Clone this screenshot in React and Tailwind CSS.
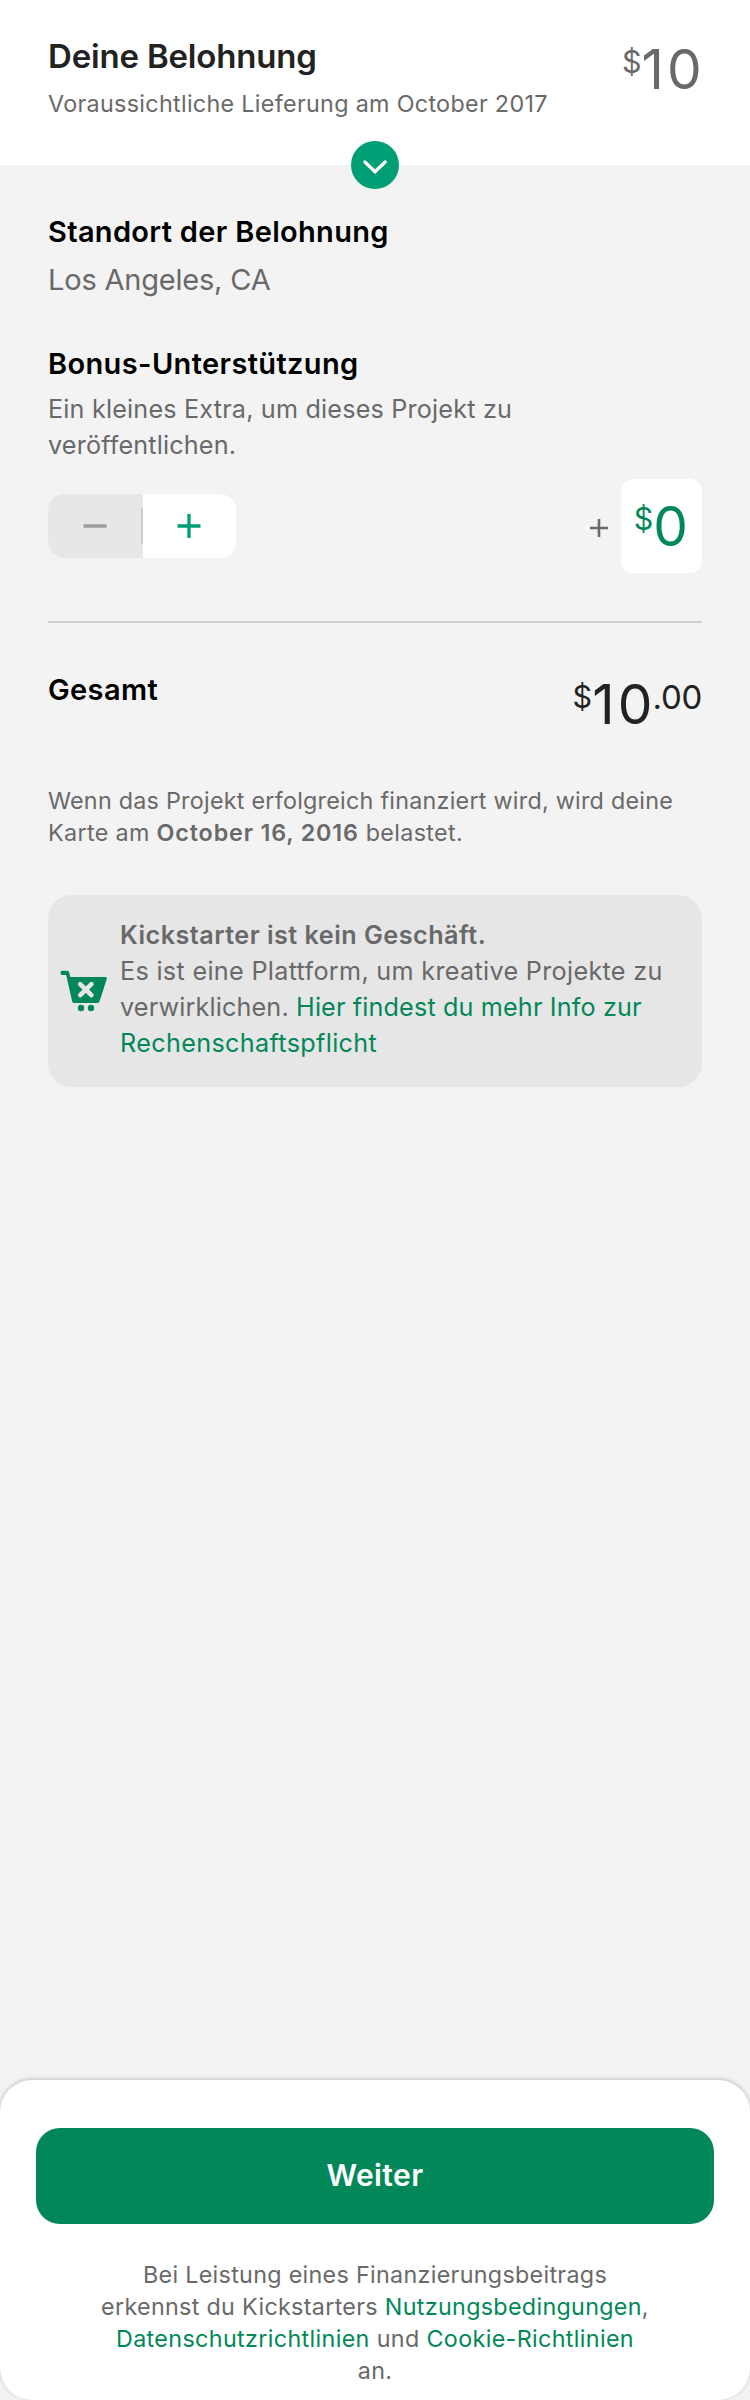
function ChevronBadge() {
  return (
    <button className="absolute -bottom-6 left-[351px] flex size-12 items-center justify-center rounded-full bg-[#009e74]">
      <svg viewBox="0 0 48 48" className="size-12" fill="none" stroke="#fff" strokeWidth="3.3" strokeLinecap="round" strokeLinejoin="miter">
        <path d="M13.9 21 24 30.7 34.100 21" />
      </svg>
    </button>
  );
}

function CartIcon() {
  return (
    <svg viewBox="0 0 48 42" className="h-[42px] w-12 shrink-0">
      <path
        fill="#028858"
        d="M2.2.8H7c1.2 0 1.9.6 2.2 1.8L10.3 7h35.2c1.1 0 1.6.8 1.3 1.8l-7.2 22.4c-.4 1.2-1.2 1.8-2.4 1.8H14.4c-1.2 0-2-.6-2.3-1.8L6.2 4.9h-4C1.1 4.9.6 4.2.6 2.9S1.1.8 2.2.8Z"
      />
      <path d="m20.2 14.2 11.2 11M31.4 14.2l-11.2 11" stroke="#e6e6e6" strokeWidth="4.6" strokeLinecap="round" />
      <circle cx="21" cy="38" r="3.2" fill="#028858" />
      <circle cx="31" cy="38" r="3.2" fill="#028858" />
    </svg>
  );
}

function Price({ amount, cents, spread }) {
  return (
    <div className="flex items-start whitespace-nowrap">
      <span className="mt-[5px] text-[30.5px] leading-8">$</span>
      <span className={spread ? "text-[55px] leading-[56px] tracking-[3.2px]" : "text-[55px] leading-[56px]"}>{amount}</span>
      {cents && <span className="mt-[5px] -ml-[3px] text-[33px] leading-8 tracking-[-0.3px]">{cents}</span>}
    </div>
  );
}

function Header() {
  return (
    <header className="relative flex h-[165px] items-start justify-between bg-white pr-[45px] pl-12">
      <div className="pt-9 whitespace-nowrap">
        <h1 className="text-[33px] leading-10 font-semibold tracking-[-0.18px] text-[#222222]">Deine Belohnung</h1>
        <p className="mt-3 text-[23.3px] leading-8 tracking-[0.32px] text-[#696969]">
          Voraussichtliche Lieferung am October 2017
        </p>
      </div>
      <div className="pt-[41px] text-[#696969]">
        <Price amount="10" spread />
      </div>
      <ChevronBadge />
    </header>
  );
}

function Stepper() {
  return (
    <div className="flex h-16 w-[188px] overflow-hidden rounded-2xl bg-white">
      <button className="relative flex w-[95px] items-center justify-center bg-[#e7e7e7] pr-0.5">
        <svg viewBox="0 0 24 24" className="size-6" stroke="#9b9c9c" strokeWidth="3.6">
          <path d="M.5 12h23" />
        </svg>
        <span className="absolute top-[14px] right-0 h-9 w-0.5 bg-[#cccccc]" />
      </button>
      <button className="flex w-[93px] items-center justify-center pr-px">
        <svg viewBox="0 0 24 24" className="size-6" stroke="#009e74" strokeWidth="3.3">
          <path d="M.5 12h23M12 0v24" />
        </svg>
      </button>
    </div>
  );
}

function Notice() {
  return (
    <aside className="mt-[46px] flex h-48 items-center gap-3 rounded-3xl bg-[#e6e6e6] pl-3 text-[25.2px] leading-9 whitespace-nowrap text-[#696969]">
      <CartIcon />
      <div className="pb-1">
        <p className="font-semibold tracking-[0.48px]">Kickstarter ist kein Geschäft.</p>
        <p className="tracking-[0.31px]">Es ist eine Plattform, um kreative Projekte zu</p>
        <p className="tracking-[0.145px]">
          verwirklichen. <a className="text-[#028858]">Hier findest du mehr Info zur</a>
        </p>
        <p className="tracking-[0.34px]">
          <a className="text-[#028858]">Rechenschaftspflicht</a>
        </p>
      </div>
    </aside>
  );
}

function Footer() {
  return (
    <footer className="h-80 rounded-[32px] bg-white px-9 pt-12 shadow-[0_-1px_4px_rgba(0,0,0,0.22)]">
      <button className="flex h-24 w-full items-center justify-center rounded-3xl bg-[#028858] pb-px text-[30px] font-semibold tracking-[0.4px] text-white">
        Weiter
      </button>
      <div className="mt-[35px] text-center text-[23.3px] leading-8 whitespace-nowrap text-[#696969]">
        <p className="tracking-[0.311px]">Bei Leistung eines Finanzierungsbeitrags</p>
        <p className="tracking-[0.32px]">
          erkennst du Kickstarters <a className="text-[#028858]">Nutzungsbedingungen</a>,
        </p>
        <p className="tracking-[0.36px]">
          <a className="text-[#028858]">Datenschutzrichtlinien</a> und <a className="text-[#028858]">Cookie-Richtlinien</a>
        </p>
        <p className="tracking-[0.3px]">an.</p>
      </div>
    </footer>
  );
}

export default function App() {
  return (
    <div className="flex h-[2400px] w-[750px] flex-col overflow-hidden bg-[#f3f3f3] font-['Inter','Liberation_Sans',sans-serif]">
      <Header />
      <main className="flex-1 px-12 pt-[49px] text-[#696969]">
        <h2 className="text-[29px] leading-9 font-semibold tracking-[0.322px] text-black">Standort der Belohnung</h2>
        <p className="mt-3 text-[29px] leading-9 tracking-[-0.2px]">Los Angeles, CA</p>

        <h2 className="mt-12 text-[29px] leading-9 font-semibold tracking-[0.363px] text-black">Bonus-Unterstützung</h2>
        <div className="mt-[9px] text-[25.2px] leading-9 whitespace-nowrap">
          <p className="tracking-[0.18px]">Ein kleines Extra, um dieses Projekt zu</p>
          <p className="tracking-[0.16px]">veröffentlichen.</p>
        </div>

        <div className="mt-4 flex items-center justify-between">
          <Stepper />
          <div className="flex items-center gap-[13px]">
            <svg viewBox="0 0 18 18" className="mt-1 size-[18px]" stroke="#696969" strokeWidth="2.6">
              <path d="M0 9h18M9 0v18" />
            </svg>
            <div className="flex h-[94px] w-[81px] items-start justify-end rounded-xl bg-white pt-[19px] pr-3.5 text-[#028858]">
              <Price amount="0" />
            </div>
          </div>
        </div>

        <hr className="mt-12 h-0.5 border-0 bg-[#cfcfcf]" />

        <div className="mt-[49px] flex items-start justify-between">
          <h2 className="text-[29px] leading-9 font-semibold tracking-[0.367px] text-black">Gesamt</h2>
          <div className="mt-1 text-[#222222]">
            <Price amount="10" cents=".00" spread />
          </div>
        </div>

        <div className="mt-[53px] text-[23.3px] leading-8 whitespace-nowrap">
          <p className="tracking-[0.26px]">Wenn das Projekt erfolgreich finanziert wird, wird deine</p>
          <p className="tracking-[0.35px]">
            Karte am <strong className="font-semibold tracking-[0.85px]">October 16, 2016</strong> belastet.
          </p>
        </div>

        <Notice />
      </main>
      <Footer />
    </div>
  );
}
